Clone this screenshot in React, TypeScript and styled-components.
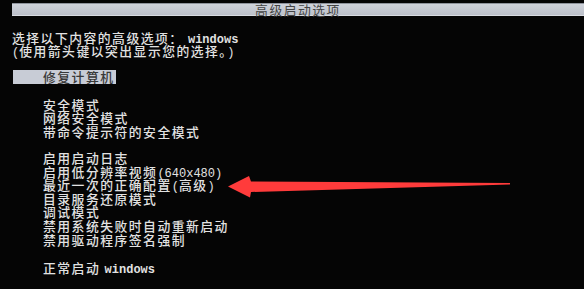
import styled, { createGlobalStyle } from 'styled-components'

const GlobalStyle = createGlobalStyle`
  html, body {
    margin: 0;
    padding: 0;
    background: #050505;
  }
`

const Screen = styled.div`
  position: relative;
  width: 584px;
  height: 289px;
  overflow: hidden;
  box-sizing: border-box;
  padding: 3px 0 0 12px;
  display: flex;
  flex-direction: column;
  background: #050505;
  color: #e2e2e2;
  font-family: "Noto Sans CJK SC", "Noto Sans", sans-serif;
  font-size: 12.8px;
  font-weight: 500;
  letter-spacing: 1.5px;
  line-height: 13.6px;
`

const TitleBar = styled.div`
  height: 13px;
  flex: none;
  display: flex;
  align-items: center;
  justify-content: center;
  background: linear-gradient(#cfd3da, #bcc0ca);
  border-top: 1px solid #8e939c;
  border-bottom: 1px solid #d9dce2;
  box-sizing: border-box;
  color: #444;
  font-weight: 400;
  line-height: 11px;
`

const Prompt = styled.div`
  margin-top: 16px;
`

const Line = styled.div<{ $h?: number }>`
  height: ${p => p.$h ?? 13.6}px;
  line-height: ${p => p.$h ?? 13.6}px;
  white-space: nowrap;
`

const Latin = styled.span<{ $bold?: boolean }>`
  font-family: "Liberation Mono", "DejaVu Sans Mono", monospace;
  font-size: 12px;
  line-height: 0;
  letter-spacing: 0;
  font-weight: ${p => (p.$bold ? 700 : 400)};
`

const Selected = styled.div`
  margin-top: 13px;
  flex: none;
  align-self: flex-start;
  margin-left: 1px;
  padding: 0 2px 0 30px;
  height: 13.6px;
  line-height: 13.6px;
  background: #c8ccd6;
  color: #383838;
`

const Group = styled.div<{ $gap: number }>`
  margin-top: ${p => p.$gap}px;
  padding-left: 31px;
  flex: none;
`

const Description = styled.div`
  margin-top: 15px;
  flex: none;
  white-space: nowrap;
  line-height: 13.6px;
  color: #cfcfcf;
`

const Arrow = styled.svg`
  position: absolute;
  left: 0;
  top: 0;
  pointer-events: none;
`

export default function App() {
  return (
    <>
      <GlobalStyle />
      <Screen>
        <TitleBar>高级启动选项</TitleBar>
        <Prompt>
          <Line $h={12.6}>
            选择以下内容的高级选项： <Latin $bold>windows</Latin>
          </Line>
          <Line $h={12.6}>
            <Latin>(</Latin>使用箭头键以突出显示您的选择。<Latin>)</Latin>
          </Line>
        </Prompt>
        <Selected>修复计算机</Selected>
        <Group $gap={14}>
          <Line>安全模式</Line>
          <Line>网络安全模式</Line>
          <Line>带命令提示符的安全模式</Line>
        </Group>
        <Group $gap={12.5}>
          <Line>启用启动日志</Line>
          <Line>
            启用低分辨率视频<Latin>(640x480)</Latin>
          </Line>
          <Line>
            最近一次的正确配置<Latin>(</Latin>高级<Latin>)</Latin>
          </Line>
          <Line>目录服务还原模式</Line>
          <Line>调试模式</Line>
          <Line>禁用系统失败时自动重新启动</Line>
          <Line>禁用驱动程序签名强制</Line>
        </Group>
        <Group $gap={14.5}>
          <Line>
            正常启动 <Latin $bold>windows</Latin>
          </Line>
        </Group>
        <Description>
          描述：&nbsp;&nbsp;查看系统恢复工具列表，可用于修复启动问题、运行诊断程序，或者还原系统
        </Description>
        <Arrow width="584" height="289" viewBox="0 0 584 289">
          <polygon
            points="228,186.5 249,176 251,181.5 510,183 510,184.5 251,192 250,197.5"
            fill="#ff3b3b"
          />
        </Arrow>
      </Screen>
    </>
  )
}
